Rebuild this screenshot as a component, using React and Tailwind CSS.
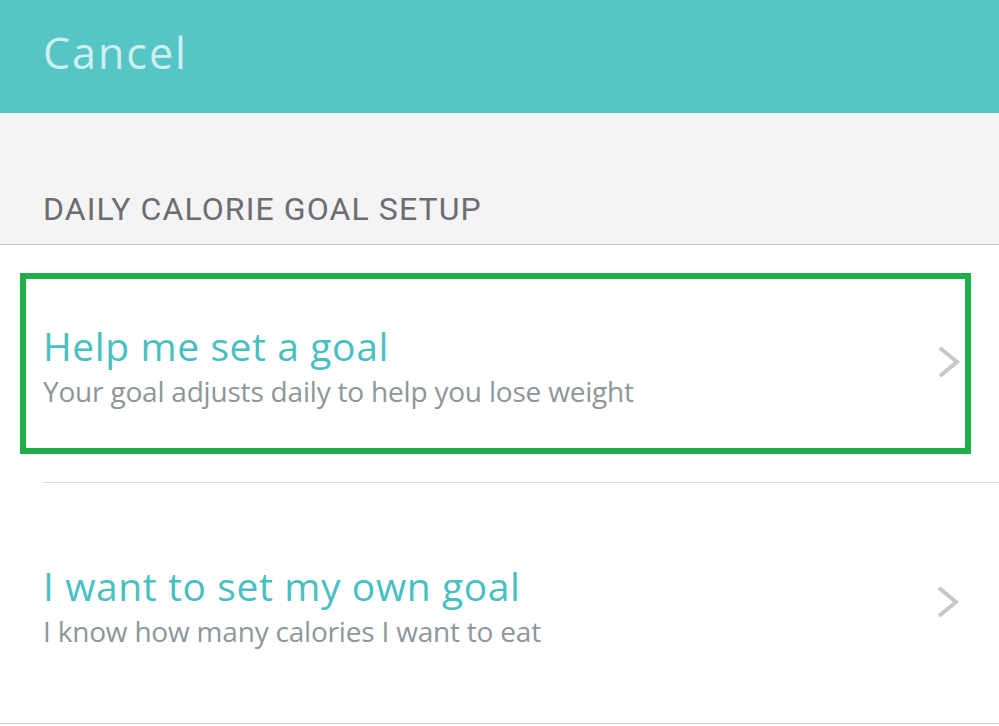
function Chevron() {
  return (
    <svg width="24" height="34" viewBox="0 0 24 34" className="shrink-0">
      <polyline
        points="3,3 20,17 3,31"
        fill="none"
        stroke="#C7C7CC"
        strokeWidth="4"
        strokeLinejoin="miter"
      />
    </svg>
  );
}

function GoalOption({ title, subtitle }) {
  return (
    <div className="flex items-center">
      <div className="flex-1">
        <div className="text-[39px] leading-none tracking-[0.6px] text-[#48C0C2]">{title}</div>
        <div className="mt-[12px] text-[28px] leading-none tracking-[-0.2px] text-[#8E9699]">{subtitle}</div>
      </div>
      <div className="mb-[7px]">
        <Chevron />
      </div>
    </div>
  );
}

export default function App() {
  return (
    <div className="h-[726px] w-[999px] overflow-hidden bg-white font-['Open_Sans',sans-serif]">
      <div className="h-[113px] bg-[#56C5C6] pl-[43px] pt-[31px]">
        <span className="text-[43px] leading-none tracking-[2px] text-[#CFEFEF]">Cancel</span>
      </div>

      <div className="h-[132px] border-b border-[#C8C7CC] bg-[#F4F4F4] pl-[43px] pt-[80px]">
        <div className="font-['Roboto',sans-serif] text-[32px] leading-none tracking-[1.1px] text-[#6D6D72]">
          DAILY CALORIE GOAL SETUP
        </div>
      </div>

      <div className="pb-[28px] pl-[20px] pr-[28px] pt-[28px]">
        <div className="border-[6px] border-[#1EAF4B] pb-[43px] pl-[17px] pr-[4px] pt-[47px]">
          <GoalOption
            title="Help me set a goal"
            subtitle="Your goal adjusts daily to help you lose weight"
          />
        </div>
      </div>

      <div className="ml-[43px] border-t border-[#DCDCDC]" />

      <div className="border-b border-[#CECECE] pb-[78px] pl-[43px] pr-[39px] pt-[83px]">
        <GoalOption
          title="I want to set my own goal"
          subtitle="I know how many calories I want to eat"
        />
      </div>
    </div>
  );
}
